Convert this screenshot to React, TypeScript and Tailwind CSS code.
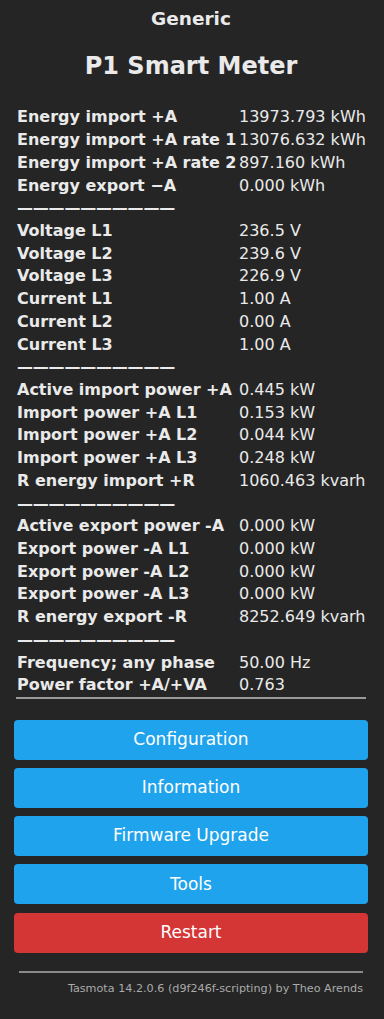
const rows: [string, string][] = [
  ['Energy import +A', '13973.793 kWh'],
  ['Energy import +A rate 1', '13076.632 kWh'],
  ['Energy import +A rate 2', '897.160 kWh'],
  ['Energy export \u2212A', '0.000 kWh'],
  ['-', ''],
  ['Voltage L1', '236.5 V'],
  ['Voltage L2', '239.6 V'],
  ['Voltage L3', '226.9 V'],
  ['Current L1', '1.00 A'],
  ['Current L2', '0.00 A'],
  ['Current L3', '1.00 A'],
  ['-', ''],
  ['Active import power +A', '0.445 kW'],
  ['Import power +A L1', '0.153 kW'],
  ['Import power +A L2', '0.044 kW'],
  ['Import power +A L3', '0.248 kW'],
  ['R energy import +R', '1060.463 kvarh'],
  ['-', ''],
  ['Active export power -A', '0.000 kW'],
  ['Export power -A L1', '0.000 kW'],
  ['Export power -A L2', '0.000 kW'],
  ['Export power -A L3', '0.000 kW'],
  ['R energy export -R', '8252.649 kvarh'],
  ['-', ''],
  ['Frequency; any phase', '50.00 Hz'],
  ['Power factor +A/+VA', '0.763'],
];

const buttons = ['Configuration', 'Information', 'Firmware Upgrade', 'Tools'];

export default function App() {
  return (
    <div className="min-h-[1019px] bg-[#252525] text-[#eaeaea] font-['DejaVu_Sans',Verdana,sans-serif]">
      <div className="pl-[14px] pr-[16px] pt-[7px]">
        {/* Header */}
        <div className="text-center">
          <h3 className="text-[18.5px] font-bold leading-[24px]">Generic</h3>
          <h2 className="mt-[20px] text-[24px] font-bold leading-[30px]">P1 Smart Meter</h2>
        </div>

        {/* Sensor table */}
        <div className="mt-[25px] px-[3px]">
          {rows.map(([label, value], i) => (
            <div key={i} className="flex h-[22.72px] items-center text-[16px] whitespace-nowrap">
              {label === '-' ? (
                <span className="font-bold tracking-[-0.2px]">{'\u2014'.repeat(10)}</span>
              ) : (
                <>
                  <span className="w-[222px] shrink-0 font-bold">{label}</span>
                  <span>{value}</span>
                </>
              )}
            </div>
          ))}
        </div>
        <div className="mx-[2px] h-[2px] bg-[#9a9a9a]" />

        {/* Buttons */}
        <div className="mt-[21px] flex flex-col gap-[8.25px]">
          {buttons.map((b) => (
            <button
              key={b}
              className="h-[40px] w-full rounded-[4px] bg-[#1fa3ec] text-[17px] text-white"
            >
              {b}
            </button>
          ))}
          <button className="h-[40px] w-full rounded-[4px] bg-[#d43535] text-[17px] text-white">
            Restart
          </button>
        </div>

        {/* Footer */}
        <div className="mx-[5px] mt-[18px] h-[2px] bg-[#8a8a8a]" />
        <div className="mt-[6px] pr-[5px] text-right text-[11.2px] leading-[20px] text-[#aaaaaa]">
          Tasmota 14.2.0.6 (d9f246f-scripting) by Theo Arends
        </div>
      </div>
    </div>
  );
}
